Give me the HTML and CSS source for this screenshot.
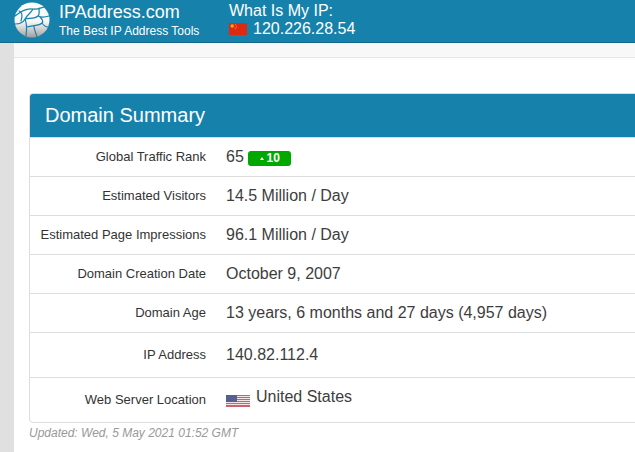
FILE: index.html
```html
<!DOCTYPE html>
<html lang="en">
<head>
<meta charset="utf-8">
<title>IPAddress.com</title>
<link rel="stylesheet" href="styles.css">
</head>
<body>
<header class="topbar">
  <a class="brand">
    <svg class="logo" viewBox="0 0 36 36" width="36" height="36">
      <defs>
        <linearGradient id="globe" x1="0" y1="0" x2="0" y2="1">
          <stop offset="0" stop-color="#ffffff"/>
          <stop offset="0.55" stop-color="#f6f6f6"/>
          <stop offset="1" stop-color="#a0a0a0"/>
        </linearGradient>
      </defs>
      <circle cx="18" cy="18" r="17.5" fill="url(#globe)"/>
      <path d="M1 14 C7 9 12 6 19 7 C24 8 28 5 31 5 M19 7 C17 11 13 13 11 17 C9 21 4 22 1 22 M11 17 C16 16 21 17 24 14 C26 12 25 9 25 6 M24 14 C28 16 32 15 35 14 M11 17 C13 22 13 27 12 34 M13 25 C19 23 25 24 28 21 C30 19 27 16 26 15 M28 21 C30 24 32 25 34 25 M20 24 C20 28 22 31 23 35 M5 9 C8 10 9 13 7 19" fill="none" stroke="#1682ab" stroke-width="1.2" stroke-linecap="round"/>
    </svg>
    <span class="brand-text">
      <span class="brand-name">IPAddress.com</span>
      <span class="brand-tag">The Best IP Address Tools</span>
    </span>
  </a>
  <div class="myip">
    <div class="myip-label">What Is My IP:</div>
    <div class="myip-value">
      <svg class="flag-cn" viewBox="0 0 18 12" width="18" height="12">
        <rect width="18" height="12" fill="#de2910"/>
        <circle cx="3.2" cy="3" r="1.7" fill="#f5a81c"/>
        <circle cx="6.4" cy="1.6" r="0.5" fill="#f5a81c"/>
        <circle cx="7.2" cy="3" r="0.5" fill="#f5a81c"/>
        <circle cx="7.2" cy="4.6" r="0.5" fill="#f5a81c"/>
        <circle cx="6.2" cy="5.8" r="0.5" fill="#f5a81c"/>
      </svg>
      <span>120.226.28.54</span>
    </div>
  </div>
</header>
<div class="layout">
  <aside class="rail"></aside>
  <main class="content">
    <div class="strip"></div>
    <section class="summary">
      <div class="card">
        <h2 class="card-title">Domain Summary</h2>
        <div class="row">
          <div class="label">Global Traffic Rank</div>
          <div class="value">65 <span class="badge"><span class="arrow"></span>10</span></div>
        </div>
        <div class="row">
          <div class="label">Estimated Visitors</div>
          <div class="value">14.5 Million / Day</div>
        </div>
        <div class="row">
          <div class="label">Estimated Page Impressions</div>
          <div class="value">96.1 Million / Day</div>
        </div>
        <div class="row">
          <div class="label">Domain Creation Date</div>
          <div class="value">October 9, 2007</div>
        </div>
        <div class="row">
          <div class="label">Domain Age</div>
          <div class="value">13 years, 6 months and 27 days (4,957 days)</div>
        </div>
        <div class="row row-tall">
          <div class="label">IP Address</div>
          <div class="value">140.82.112.4</div>
        </div>
        <div class="row row-tall row-last">
          <div class="label">Web Server Location</div>
          <div class="value value-flag">
            <svg class="flag-us" viewBox="0 0 24 12" width="24" height="12">
              <rect width="24" height="12" fill="#f3e4e4"/>
              <g fill="#cf6072">
                <rect y="0" width="24" height="1"/>
                <rect y="2" width="24" height="1"/>
                <rect y="4" width="24" height="1"/>
                <rect y="6" width="24" height="1"/>
                <rect y="8" width="24" height="1"/>
                <rect y="10" width="24" height="2"/>
              </g>
              <rect width="11" height="7" fill="#565f92"/>
            </svg>
            <span class="flag-text">United States</span>
          </div>
        </div>
      </div>
      <p class="updated">Updated: Wed, 5 May 2021 01:52 GMT</p>
    </section>
  </main>
</div>
</body>
</html>
```
FILE: styles.css
```css
* { box-sizing: border-box; }
html, body { margin: 0; padding: 0; height: 100%; overflow: hidden; background: #fff; }
body { font-family: "Liberation Sans", Arial, sans-serif; color: #333; }

.topbar {
  height: 43px;
  background: #1682ab;
  border-bottom: 1px solid #12698b;
  display: flex;
  color: #fff;
  padding-left: 14px;
}
.brand { display: flex; width: 215px; padding-top: 2px; }
.logo { flex: none; }
.brand-text { display: flex; flex-direction: column; margin-left: 9px; }
.brand-name { font-size: 18px; line-height: 20px; }
.brand-tag { font-size: 12px; line-height: 14px; margin-top: 2px; }
.myip-label { font-size: 16px; line-height: 18px; margin-top: 2px; }
.myip-value { display: flex; align-items: center; font-size: 16px; line-height: 18px; }
.flag-cn { margin-right: 6px; }

.layout { display: flex; height: 409px; }
.rail { width: 14px; flex: none; background: #e0e0e0; }
.content { flex: 1; min-width: 0; }
.strip { height: 15px; background: #f8f8f8; border-bottom: 1px solid #e7e7e7; }
.summary { padding: 35px 0 0 15px; width: 760px; }

.card {
  border: 1px solid #dddddd;
  border-radius: 4px;
  background: #fff;
  overflow: hidden;
}
.card-title {
  margin: 0;
  height: 44px;
  background: #1682ab;
  border-bottom: 1px solid #dddddd;
  color: #fff;
  font-size: 20px;
  font-weight: 400;
  line-height: 42px;
  padding-left: 15px;
}
.row {
  display: flex;
  height: 39px;
  border-bottom: 1px solid #dddddd;
  align-items: center;
}
.row-tall { height: 45px; }
.row-last { border-bottom: 0; height: 44px; }
.label {
  width: 176px;
  text-align: right;
  font-size: 13px;
  padding-bottom: 2px;
  flex: none;
}
.value { margin-left: 20px; font-size: 16px; color: #3d3d3d; }
.value-flag { display: flex; align-items: center; }
.flag-us { margin-right: 6px; margin-top: 1px; }
.flag-text { margin-bottom: 6px; }
.badge {
  display: inline-block;
  vertical-align: 0;
  background: #00a800;
  color: #fff;
  font-size: 12px;
  font-weight: 700;
  line-height: 15px;
  height: 15px;
  width: 43px;
  border-radius: 3px;
  text-align: center;
}
.arrow {
  display: inline-block;
  width: 0;
  height: 0;
  border: 2.5px solid transparent;
  border-top: 0;
  border-bottom: 3px solid #fff;
  margin-right: 3px;
  vertical-align: 2px;
}
.updated {
  margin: 3px 0 0;
  font-size: 12px;
  font-style: italic;
  color: #999;
}
```
